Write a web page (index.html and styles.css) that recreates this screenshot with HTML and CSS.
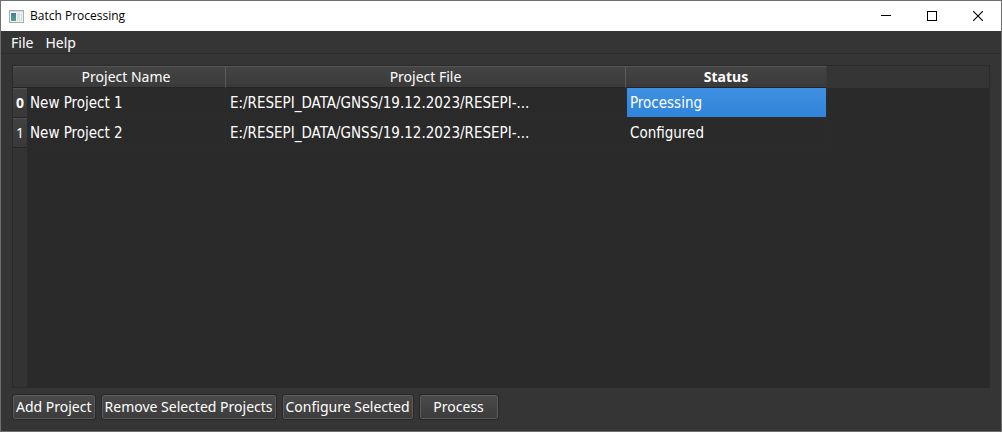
FILE: index.html
```html
<!DOCTYPE html>
<html lang="en">

<head>
	<meta charset="utf-8">
	<meta name="viewport" content="width=device-width, initial-scale=1">
	<title>Batch Processing</title>
	<link rel="stylesheet" href="styles.css">
</head>

<body>

	<div class="window">

		<header class="titleBar">
			<svg class="appIcon" width="15" height="13" viewBox="0 0 15 13" shape-rendering="crispEdges" aria-hidden="true">
				<defs>
					<linearGradient id="iconFill" x1="0" y1="0" x2="0" y2="1">
						<stop offset="0" stop-color="#4a7ba6"/>
						<stop offset="1" stop-color="#4fa67c"/>
					</linearGradient>
				</defs>
				<rect width="15" height="13" fill="#a9adb0"/>
				<rect x="1" y="1" width="13" height="1" fill="#d5d8da"/>
				<rect x="1" y="2" width="13" height="10" fill="#f1f3f3"/>
				<rect x="2" y="3" width="5" height="8" fill="url(#iconFill)"/>
				<rect x="8" y="3" width="3" height="8" fill="#dbe2e2"/>
				<rect x="12" y="3" width="1" height="8" fill="#c9dcd8"/>
			</svg>
			<h1 class="title">Batch Processing</h1>
			<div class="windowButtons">
				<button type="button" class="windowButton" aria-label="Minimize">
					<svg width="10" height="10" viewBox="0 0 10 10" shape-rendering="crispEdges"><path d="M0 4.5h10" stroke="#000"/></svg>
				</button>
				<button type="button" class="windowButton" aria-label="Maximize">
					<svg width="10" height="10" viewBox="0 0 10 10" shape-rendering="crispEdges"><path d="M.5 .5h9v9h-9z" fill="none" stroke="#000"/></svg>
				</button>
				<button type="button" class="windowButton" aria-label="Close">
					<svg width="10" height="10" viewBox="0 0 10 10"><path d="M0 0l10 10M10 0L0 10" stroke="#000" stroke-width="1.1"/></svg>
				</button>
			</div>
		</header>

		<nav class="menuBar">
			<a href="#file" class="menuItem">File</a>
			<a href="#help" class="menuItem">Help</a>
		</nav>

		<main class="content">
			<div class="tableFrame">
				<table class="projects">
					<colgroup>
						<col class="indexCol">
						<col class="nameCol">
						<col class="fileCol">
						<col class="statusCol">
						<col>
					</colgroup>
					<thead>
						<tr>
							<td class="corner"></td>
							<th scope="col">Project Name</th>
							<th scope="col">Project File</th>
							<th scope="col" class="current">Status</th>
							<td class="rest"></td>
						</tr>
					</thead>
					<tbody>
						<tr>
							<th scope="row" class="current">0</th>
							<td>New Project 1</td>
							<td>E:/RESEPI_DATA/GNSS/19.12.2023/RESEPI-...</td>
							<td class="selected">Processing</td>
							<td></td>
						</tr>
						<tr>
							<th scope="row">1</th>
							<td>New Project 2</td>
							<td>E:/RESEPI_DATA/GNSS/19.12.2023/RESEPI-...</td>
							<td>Configured</td>
							<td></td>
						</tr>
					</tbody>
				</table>
			</div>

			<div class="actions">
				<button type="button" class="button">Add Project</button>
				<button type="button" class="button">Remove Selected Projects</button>
				<button type="button" class="button">Configure Selected</button>
				<button type="button" class="button">Process</button>
			</div>
		</main>

	</div>

</body>

</html>
```
FILE: styles.css
```css
* {
	box-sizing: border-box;
}

body {
	margin: 0;
	font: 14px/20px "Noto Sans", sans-serif;
	color: #ffffff;
}

.window {
	display: flex;
	flex-direction: column;
	min-height: 100vh;
	border: 1px solid #6f6f6f;
	background-color: #353535;
}

.titleBar {
	display: flex;
	align-items: center;
	height: 30px;
	padding-left: 8px;
	background-color: #ffffff;
	color: #000000;
}

.title {
	margin: 0 0 0 6px;
	font: 12px/16px "Open Sans", sans-serif;
}

.windowButtons {
	display: flex;
	height: 100%;
	margin-left: auto;
}

.windowButton {
	display: flex;
	align-items: center;
	justify-content: center;
	width: 46px;
	padding: 0;
	border: none;
	background-color: transparent;
}

.menuBar {
	display: flex;
	gap: 12px;
	height: 23px;
	padding: 2px 10px 0;
	border-bottom: 1px solid #2d2d2d;
}

.menuItem {
	color: #ffffff;
	text-decoration: none;
}

.content {
	display: flex;
	flex: 1;
	flex-direction: column;
	gap: 7px;
	padding: 11px 11px 12px;
}

/* the left strip is the row header carried down to the bottom */
.tableFrame {
	flex: 1;
	border: 1px solid #2b2b2b;
	background: linear-gradient(to right, #333333 14px, #2a2a2a 14px);
}

.projects {
	width: 100%;
	table-layout: fixed;
	border-collapse: separate;
	border-spacing: 0;
}

.indexCol {
	width: 14px;
}

.nameCol {
	width: 199px;
}

.fileCol {
	width: 400px;
}

.statusCol {
	width: 201px;
}

.projects th {
	padding: 0;
	font-weight: normal;
	text-align: center;
}

.projects .current {
	font-weight: bold;
}

.projects thead tr {
	height: 22px;
}

.projects thead th,
.projects .corner {
	border-top: 1px solid #555555;
	border-bottom: 1px solid #252525;
	background: linear-gradient(#444444, #3a3a3a);
}

.projects thead th {
	border-right: 1px solid #5a5a5a;
}

.projects thead .current {
	border-right-color: #3a3a3a;
}

.projects .rest {
	background-color: #353535;
}

.projects tbody tr {
	height: 30px;
}

.projects tbody th {
	border-top: 1px solid #505050;
	border-bottom: 1px solid #252525;
	background: linear-gradient(#414141, #383838);
}

.projects tbody td {
	padding: 0 3px;
	border-right: 1px solid #2c2c2c;
	border-bottom: 1px solid #2c2c2c;
	font: 15px/20px "DejaVu Sans Condensed", sans-serif;
	overflow: hidden;
	text-overflow: ellipsis;
	white-space: nowrap;
}

.projects tbody td + td {
	border-left: 1px solid #2a2a2a;
}

.projects tbody td:last-child {
	border: none;
}

.projects .selected {
	background: linear-gradient(#3f90e2, #2f84da) padding-box;
}

.actions {
	display: flex;
	flex-wrap: wrap;
	gap: 7px;
	padding: 0 1px;
}

.button {
	min-width: 78px;
	height: 24px;
	padding: 0 2px;
	border: 1px solid #5c5c5c;
	border-radius: 2px;
	outline: 1px solid #282828;
	background: linear-gradient(#4a4a4a, #3c3c3c);
	color: #ffffff;
	font: inherit;
}
```
